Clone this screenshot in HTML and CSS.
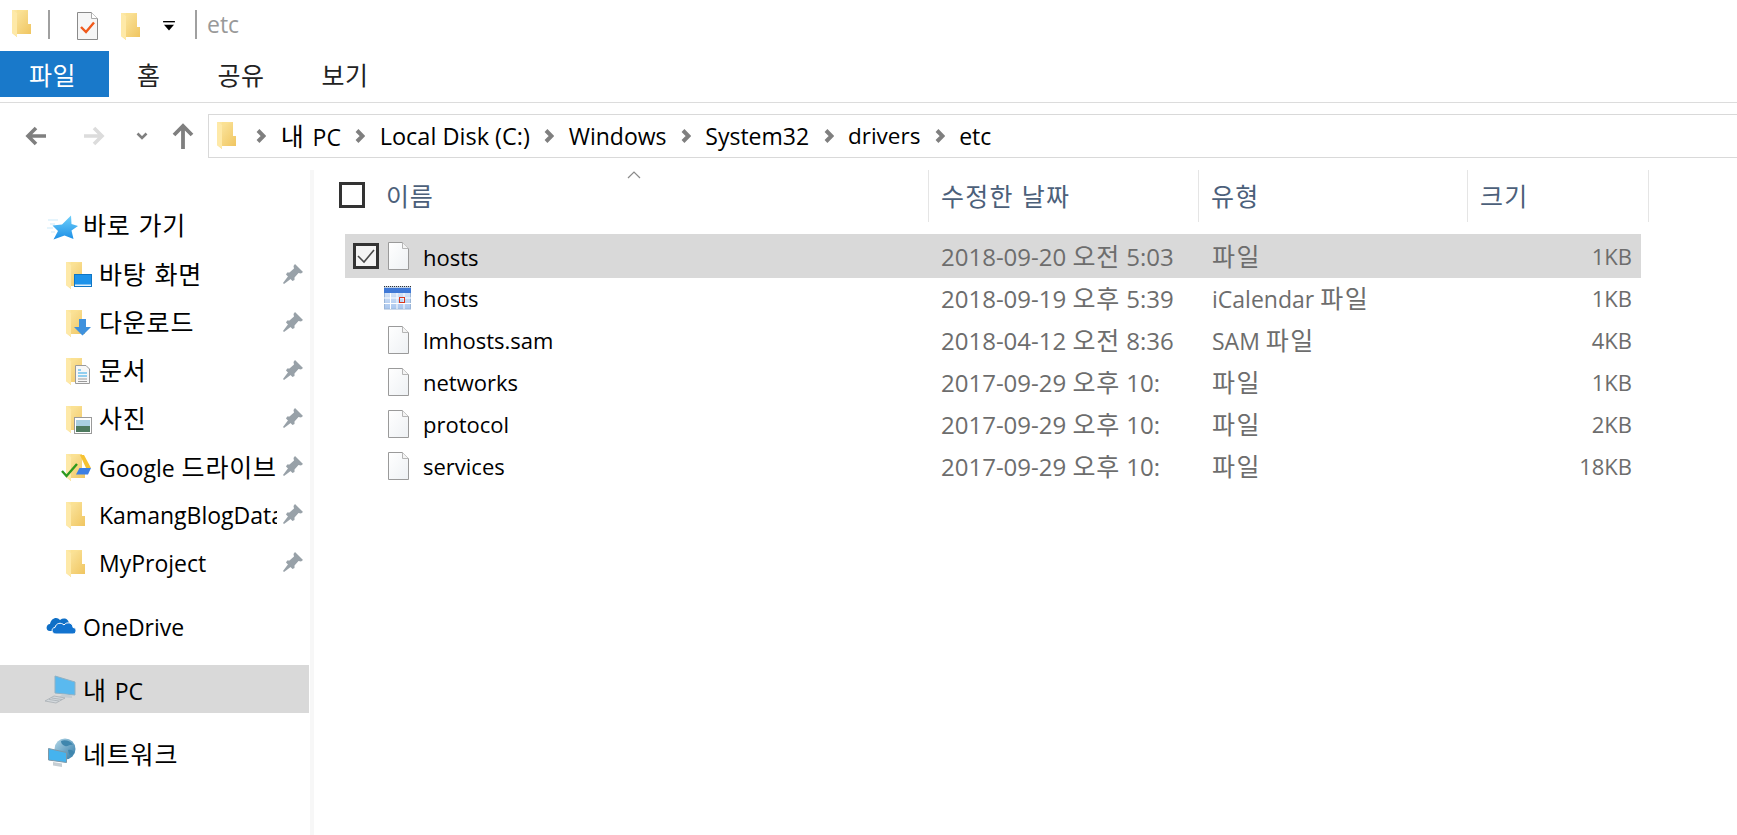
FILE: index.html
```html
<!DOCTYPE html>
<html lang="ko">
<head>
<meta charset="utf-8">
<title>etc</title>
<link rel="stylesheet" href="styles.css">
</head>
<body>
<svg class="defs" width="0" height="0" aria-hidden="true">
  <defs>
    <linearGradient id="fg" x1="0" y1="0" x2="1" y2="1">
      <stop offset="0" stop-color="#fdeaa8"/>
      <stop offset="1" stop-color="#efc35c"/>
    </linearGradient>
    <linearGradient id="pg" x1="0" y1="0" x2="1" y2="1">
      <stop offset="0" stop-color="#ffffff"/>
      <stop offset="1" stop-color="#eef1f4"/>
    </linearGradient>
    <linearGradient id="sg" x1="0" y1="0" x2="0" y2="1">
      <stop offset="0" stop-color="#6fd0fb"/>
      <stop offset="1" stop-color="#1c8fe6"/>
    </linearGradient>
    <linearGradient id="cg" x1="0" y1="0" x2="0" y2="1">
      <stop offset="0" stop-color="#e4eefb"/>
      <stop offset="1" stop-color="#a9c6ee"/>
    </linearGradient>
    <linearGradient id="gl" x1="0" y1="0" x2="1" y2="1">
      <stop offset="0" stop-color="#b5d8e8"/>
      <stop offset="1" stop-color="#2f7aa8"/>
    </linearGradient>
    <symbol id="folder" viewBox="0 0 19 28">
      <path d="M0 0H16V14H19V24H5V27L0 23Z" fill="url(#fg)"/>
      <path d="M0 0L5 3V27L0 23Z" fill="#fee9a8"/>
      <path d="M5 3L16 0H5Z" fill="#fbe192"/>
    </symbol>
    <symbol id="pin" viewBox="0 0 20 20">
      <path d="M12 0L20 8L18 9.5L15.5 9L11.5 13.5L11.5 16L9.5 17L3 10.500L4.200 8.500L6.500 8.500L11 4.500L10.500 2Z" fill="#98a1a8"/>
      <path d="M6 11L9 14L1 20L0 19Z" fill="#98a1a8"/>
    </symbol>
    <symbol id="file" viewBox="0 0 21 28">
      <path d="M.5.5H14.500L20.500 6.500V27.500H.5Z" fill="url(#pg)" stroke="#9a9a9a"/>
      <path d="M14.500.5V6.500H20.500" fill="#f4f4f4" stroke="#b5b5b5"/>
    </symbol>
    <symbol id="chev" viewBox="0 0 10 14">
      <path d="M2 1.500L7.500 7L2 12.500" fill="none" stroke="#7f7f7f" stroke-width="4"/>
    </symbol>
  </defs>
</svg>

<div class="app">
  <header class="titlebar">
    <svg class="t-folder"><use href="#folder"/></svg>
    <span class="t-sep t-sep-first"></span>
    <svg class="t-doc" viewBox="0 0 21 28">
      <path d="M.5.5H14.500L20.500 6.500V27.500H.5Z" fill="#f6f6f6" stroke="#8a8a8a"/>
      <path d="M14.500.5V6.500H20.500" fill="#fff" stroke="#aaa"/>
      <path d="M4 15L9 20L17 10.500" fill="none" stroke="#f0591b" stroke-width="2.400"/>
    </svg>
    <svg class="t-folder t-folder-second"><use href="#folder"/></svg>
    <svg class="t-drop" viewBox="0 0 13 11">
      <rect width="13" height="1.500" fill="#000"/>
      <path d="M1 4H12L6.500 10.500Z" fill="#000"/>
    </svg>
    <span class="t-sep t-sep-last"></span>
    <span class="t-title">etc</span>
  </header>

  <nav class="ribbon">
    <span class="tab tab-file">파일</span>
    <span class="tab tab-home">홈</span>
    <span class="tab tab-share">공유</span>
    <span class="tab tab-view">보기</span>
  </nav>

  <div class="addr-row">
    <svg class="nav-arrow" viewBox="0 0 22 22"><path d="M21 11H4M11 3L3 11L11 19" fill="none" stroke="#7f7f7f" stroke-width="3.600"/></svg>
    <svg class="nav-arrow nav-forward" viewBox="0 0 22 22"><path d="M1 11H18M11 3L19 11L11 19" fill="none" stroke="#dcdcdc" stroke-width="3.600"/></svg>
    <svg class="nav-down" viewBox="0 0 12 8"><path d="M1.500 1.500L6 6L10.500 1.500" fill="none" stroke="#7f7f7f" stroke-width="2.600"/></svg>
    <svg class="nav-up" viewBox="0 0 22 26"><path d="M11 26V4M2 12L11 3L20 12" fill="none" stroke="#7f7f7f" stroke-width="3.800"/></svg>
    <div class="addr">
      <svg class="addr-folder"><use href="#folder"/></svg>
      <svg class="crumb-chev"><use href="#chev"/></svg><span><span class="ko pc-ko">내</span> PC</span>
      <svg class="crumb-chev"><use href="#chev"/></svg><span class="crumb-wide">Local Disk (C:)</span>
      <svg class="crumb-chev"><use href="#chev"/></svg><span>Windows</span>
      <svg class="crumb-chev"><use href="#chev"/></svg><span>System32</span>
      <svg class="crumb-chev"><use href="#chev"/></svg><span class="crumb-tight">drivers</span>
      <svg class="crumb-chev"><use href="#chev"/></svg><span>etc</span>
    </div>
  </div>

  <main class="main">
    <aside class="pane">
      <div class="nav-item top quick">
        <svg class="nav-icon" viewBox="0 0 36 30">
          <path d="M4 10H14M6 14H11M3 18H9M7 22H11" stroke="#cbe9fa" stroke-width="1.200"/>
          <path d="M27 5.500L27.500 14L34 16L27.500 20.500L29.500 29L20.500 25.500L9.500 29.500L14 21L8.500 15.500L18 14.500Z" fill="url(#sg)"/>
        </svg>
        <span class="label ko">바로 가기</span>
      </div>

      <div class="nav-item">
        <svg class="nav-icon" viewBox="0 0 36 32">
          <use href="#folder" x="6" y="4" width="19" height="28"/>
          <rect x="14.500" y="16.500" width="17" height="12" fill="#1e93ea" stroke="#0f76c5"/>
          <rect x="15" y="26.500" width="16" height="1.500" fill="#dff1fd"/>
        </svg>
        <span class="label ko">바탕 화면</span>
        <svg class="pin"><use href="#pin"/></svg>
      </div>

      <div class="nav-item">
        <svg class="nav-icon" viewBox="0 0 36 32">
          <use href="#folder" x="6" y="4" width="19" height="28"/>
          <path d="M19 13H26V21H31L22.500 29.500L14 21H19Z" fill="#3f91dd"/>
        </svg>
        <span class="label ko">다운로드</span>
        <svg class="pin"><use href="#pin"/></svg>
      </div>

      <div class="nav-item">
        <svg class="nav-icon" viewBox="0 0 36 32">
          <use href="#folder" x="6" y="4" width="19" height="28"/>
          <path d="M15.500 11.500H26L29.500 15V29.500H15.500Z" fill="#f7f7f7" stroke="#9a9a9a"/>
          <path d="M18 16H21M18 19H27M18 22H27" stroke="#2ea7e8" stroke-width="1.200"/>
          <path d="M18 25H27M18 27.500H27" stroke="#9a9a9a"/>
        </svg>
        <span class="label ko">문서</span>
        <svg class="pin"><use href="#pin"/></svg>
      </div>

      <div class="nav-item">
        <svg class="nav-icon" viewBox="0 0 36 32">
          <use href="#folder" x="6" y="4" width="19" height="28"/>
          <rect x="14.500" y="15.500" width="17" height="16" fill="#fff" stroke="#9a9a9a"/>
          <rect x="16" y="18" width="14" height="6" fill="#a9cfe0"/>
          <rect x="16" y="24" width="14" height="6" fill="#4d7a5e"/>
        </svg>
        <span class="label ko">사진</span>
        <svg class="pin"><use href="#pin"/></svg>
      </div>

      <div class="nav-item">
        <svg class="nav-icon" viewBox="0 0 36 32">
          <use href="#folder" x="6" y="4" width="19" height="28"/>
          <path d="M20 5L24 5L31 18H26Z" fill="#f6c232"/>
          <path d="M16 24.500L19.500 18H31L28 24.500Z" fill="#3d7fe3"/>
          <path d="M2 21L6.500 26L17 14" fill="none" stroke="#2e9a1e" stroke-width="2.400"/>
        </svg>
        <span class="label latin">Google <span class="ko word-ko">드라이브</span></span>
        <svg class="pin"><use href="#pin"/></svg>
      </div>

      <div class="nav-item">
        <svg class="nav-icon" viewBox="0 0 36 32"><use href="#folder" x="6" y="4" width="19" height="28"/></svg>
        <span class="label latin">KamangBlogData</span>
        <svg class="pin"><use href="#pin"/></svg>
      </div>

      <div class="nav-item">
        <svg class="nav-icon" viewBox="0 0 36 32"><use href="#folder" x="6" y="4" width="19" height="28"/></svg>
        <span class="label latin">MyProject</span>
        <svg class="pin"><use href="#pin"/></svg>
      </div>

      <div class="nav-item top onedrive">
        <svg class="nav-icon" viewBox="0 0 36 30">
          <path d="M6 20C1 20 2 13 6 13C7 7 13 5 16 9C20 6 25 8 25 13L25 20Z" fill="#0f6fc6"/>
          <path d="M12 23C7 23 7 16.500 11 16.500C12 12 17 11 20 14C23 10 29 12 29 16.500C33 16.500 33 23 29 23Z" fill="#1273cf" stroke="#fff"/>
        </svg>
        <span class="label latin">OneDrive</span>
      </div>

      <div class="nav-item top pc">
        <svg class="nav-icon" viewBox="0 0 36 30">
          <path d="M11 2L31 8V21L11 19Z" fill="#5ab9ef" stroke="#8fb1c4"/>
          <path d="M19 20L28 21.500V24L15 23Z" fill="#c4ccd1"/>
          <path d="M1 27L10 22L21 24L12 29Z" fill="#d3d8dc" stroke="#a8afb4" stroke-width=".8"/>
          <path d="M5 25.500L15 27M7.500 24L18 25.500" stroke="#a8afb4" stroke-width=".8"/>
        </svg>
        <span class="label latin"><span class="ko pc-ko">내</span> PC</span>
      </div>

      <div class="nav-item top network">
        <svg class="nav-icon" viewBox="0 0 36 32">
          <circle cx="21" cy="11" r="10.500" fill="url(#gl)"/>
          <path d="M17 3C21 1 27 3 29 7C25 6 24 9 21 8C19 7 17 6 17 3Z" fill="#3f86ad"/>
          <path d="M24 12C27 11 30 13 30 15C28 18 26 18 25 16Z" fill="#3f86ad"/>
          <path d="M4.500 10.500L22.500 14.500V24.500L4.500 22Z" fill="#45b3ee" stroke="#7d98a8"/>
          <path d="M9 24L18 25.500V29L9 27.500Z" fill="#c7ced3"/>
        </svg>
        <span class="label ko">네트워크</span>
      </div>
    </aside>

    <section class="content">
      <div class="head">
        <div class="hcol hname">
          <span class="box"></span>
          <span class="hlabel ko">이름</span>
          <svg class="sort" viewBox="0 0 14 8"><path d="M1 7L7 1L13 7" fill="none" stroke="#8a8a8a" stroke-width="1.200"/></svg>
        </div>
        <div class="hcol hdate ko">수정한 날짜</div>
        <div class="hcol htype ko">유형</div>
        <div class="hcol hsize ko">크기</div>
      </div>

      <div class="rows">
        <div class="row selected">
          <div class="cname">
            <span class="box checked"><svg viewBox="0 0 20 20"><path d="M2 10L8 16L18 4" fill="none" stroke="#4a4a4a" stroke-width="1.600"/></svg></span>
            <span class="ficon"><svg class="file"><use href="#file"/></svg></span>
            <span class="fname">hosts</span>
          </div>
          <div class="cdate">2018-09-20 <span class="ko">오전</span> 5:03</div>
          <div class="ctype"><span class="ko">파일</span></div>
          <div class="csize">1KB</div>
        </div>

        <div class="row">
          <div class="cname">
            <span class="box blank"></span>
            <span class="ficon">
              <svg class="cal" viewBox="0 0 28 24">
                <rect x=".5" y="1" width="26" height="22" fill="url(#cg)" stroke="#9bb6d8"/>
                <rect x="0" y="2" width="27" height="5" fill="#3f78d6"/>
                <path d="M0 .5H27" stroke="#333" stroke-dasharray="1 1"/>
                <path d="M6.500 7V23M13 7V23M20 7V23M0 12H27M0 17.500H27" stroke="#fff"/>
                <rect x="15.500" y="11.500" width="5" height="5" fill="none" stroke="#d9381e"/>
              </svg>
            </span>
            <span>hosts</span>
          </div>
          <div class="cdate">2018-09-19 <span class="ko">오후</span> 5:39</div>
          <div class="ctype">iCalendar <span class="ko">파일</span></div>
          <div class="csize">1KB</div>
        </div>

        <div class="row">
          <div class="cname">
            <span class="box blank"></span>
            <span class="ficon"><svg class="file"><use href="#file"/></svg></span>
            <span>lmhosts.sam</span>
          </div>
          <div class="cdate">2018-04-12 <span class="ko">오전</span> 8:36</div>
          <div class="ctype">SAM <span class="ko">파일</span></div>
          <div class="csize">4KB</div>
        </div>

        <div class="row">
          <div class="cname">
            <span class="box blank"></span>
            <span class="ficon"><svg class="file"><use href="#file"/></svg></span>
            <span>networks</span>
          </div>
          <div class="cdate">2017-09-29 <span class="ko">오후</span> 10:</div>
          <div class="ctype"><span class="ko">파일</span></div>
          <div class="csize">1KB</div>
        </div>

        <div class="row">
          <div class="cname">
            <span class="box blank"></span>
            <span class="ficon"><svg class="file"><use href="#file"/></svg></span>
            <span>protocol</span>
          </div>
          <div class="cdate">2017-09-29 <span class="ko">오후</span> 10:</div>
          <div class="ctype"><span class="ko">파일</span></div>
          <div class="csize">2KB</div>
        </div>

        <div class="row">
          <div class="cname">
            <span class="box blank"></span>
            <span class="ficon"><svg class="file"><use href="#file"/></svg></span>
            <span>services</span>
          </div>
          <div class="cdate">2017-09-29 <span class="ko">오후</span> 10:</div>
          <div class="ctype"><span class="ko">파일</span></div>
          <div class="csize">18KB</div>
        </div>
      </div>
    </section>
  </main>
</div>
</body>
</html>
```

FILE: styles.css
```css
* { box-sizing: border-box; }

html, body {
  margin: 0;
  height: 100%;
  overflow: hidden;
  background: #fff;
}

body {
  font-family: "Open Sans", "Noto Sans CJK KR", sans-serif;
  font-size: 22px;
  line-height: 30px;
  color: #000;
}

/* Hangul set a little larger than the Latin beside it */
.ko {
  font-family: "Noto Sans CJK KR", sans-serif;
  font-size: 25px;
  letter-spacing: .8px;
}
.pc-ko { margin-right: 2px; }
.word-ko { margin-left: 1px; }

.defs { position: absolute; }

.app {
  display: flex;
  flex-direction: column;
  width: 1737px;
  height: 835px;
}

/* Title bar */
.titlebar {
  display: flex;
  align-items: center;
  height: 51px;
  padding-left: 12px;
  flex: none;
}
.t-folder { width: 19px; height: 28px; margin-bottom: 3px; }
.t-folder-second { margin: 3px 0 0 23px; }
.t-sep { width: 2px; height: 29px; background: #a0a0a0; margin-bottom: 3px; }
.t-sep-first { margin-left: 17px; }
.t-sep-last { margin-left: 20px; }
.t-doc { width: 21px; height: 28px; margin: 0 0 0 27px; }
.t-drop { width: 12px; height: 10px; margin: 0 0 0 23px; }
.t-title { margin: 0 0 3px 10px; color: #999; font-size: 23px; line-height: 1; }

/* Ribbon */
.ribbon {
  display: flex;
  align-items: flex-start;
  height: 52px;
  flex: none;
  border-bottom: 1px solid #dcdcdc;
  font-family: "Noto Sans CJK KR", sans-serif;
  font-size: 25px;
  letter-spacing: .5px;
  color: #222;
}
.tab { height: 46px; display: flex; align-items: center; }
.tab-file {
  width: 109px;
  padding-right: 4px;
  justify-content: center;
  background: #1979ca;
  color: #fff;
}
.tab-home { margin-left: 28px; }
.tab-share { margin-left: 57px; }
.tab-view { margin-left: 57px; }

/* Address row */
.addr-row {
  display: flex;
  align-items: center;
  height: 44px;
  margin-top: 11px;
  padding-left: 25px;
  flex: none;
}
.nav-arrow { width: 22px; height: 22px; flex: none; }
.nav-forward { margin-left: 36px; }
.nav-down { width: 12px; height: 8px; margin-left: 31px; flex: none; }
.nav-up { width: 22px; height: 26px; margin-left: 24px; flex: none; }
.addr {
  display: flex;
  align-items: center;
  flex: 1;
  height: 44px;
  margin-left: 14px;
  padding-left: 8px;
  border: 1px solid #d9d9d9;
  border-right: 0;
  gap: 14.4px;
  font-size: 23px;
  white-space: nowrap;
}
.addr-folder { width: 19px; height: 28px; margin-right: 6px; flex: none; }
.crumb-chev { width: 10px; height: 14px; flex: none; }
.crumb-wide { font-size: 23.5px; }
.crumb-tight { font-size: 22.5px; }

/* Main area */
.main {
  display: flex;
  flex: 1;
  min-height: 0;
  margin-top: 12px;
}

/* Navigation pane */
.pane {
  width: 314px;
  flex: none;
  padding-top: 31px;
  border-right: 4px solid #f7f7f7;
  font-size: 23px;
}
.nav-item {
  display: flex;
  align-items: center;
  height: 48px;
  width: 309px;
  padding-left: 60px;
}
.nav-icon { width: 36px; height: 32px; flex: none; }
.label {
  width: 178px;
  margin-left: 3px;
  line-height: 38px;
  overflow: hidden;
  white-space: nowrap;
  flex: none;
}
.label.ko { padding-bottom: 2px; }
.label.latin { padding-top: 2px; }
.pin { width: 20px; height: 20px; margin-left: 6px; flex: none; }
.nav-item.top { padding-left: 44px; }
.nav-item.top .label { margin-left: 3px; }
.quick { margin-bottom: 1px; }
.onedrive { margin-top: 16px; }
.pc { margin-top: 15px; background: #d9d9d9; }
.network { margin-top: 17px; }

/* Details */
.content { flex: 1; min-width: 0; }
.head { display: flex; height: 52px; color: #4c607a; }
.hcol {
  display: flex;
  align-items: center;
  height: 52px;
  flex: none;
  padding: 0 0 2px 12px;
  border-right: 1px solid #e5e5e5;
  letter-spacing: 1.2px;
}
.hname { position: relative; width: 615px; padding-left: 25px; }
.hdate { width: 270px; }
.htype { width: 269px; }
.hsize { width: 181px; }
.hlabel { margin-left: 21px; }
.sort { position: absolute; left: 313px; top: 1px; width: 14px; height: 8px; }

.box {
  display: block;
  width: 26px;
  height: 26px;
  border: 3px solid #333;
  flex: none;
}
.box.checked { background: #f4f4f4; }
.box svg { display: block; width: 20px; height: 20px; }
.box.blank { border-color: transparent; }

.rows { margin: 12px 0 0 31px; width: 1296px; }
.row {
  display: flex;
  align-items: center;
  height: 42px;
  padding-bottom: 2px;
  color: #6d6d6d;
  white-space: nowrap;
}
.row.selected { height: 44px; padding-bottom: 0; background: #d9d9d9; }
.cname {
  display: flex;
  align-items: center;
  width: 584px;
  padding-left: 8px;
  color: #000;
}
.ficon {
  display: flex;
  justify-content: center;
  width: 28px;
  margin: 0 11px 0 5px;
  flex: none;
}
.fname { padding-top: 2px; }
.file { display: block; width: 21px; height: 28px; }
.cal { display: block; width: 28px; height: 24px; }
.cdate { width: 270px; padding-left: 12px; font-size: 24px; }
.ctype { width: 269px; padding-left: 13px; font-size: 23px; }
.ctype .ko { letter-spacing: 1.5px; }
.csize { width: 173px; padding-right: 9px; text-align: right; }
```
